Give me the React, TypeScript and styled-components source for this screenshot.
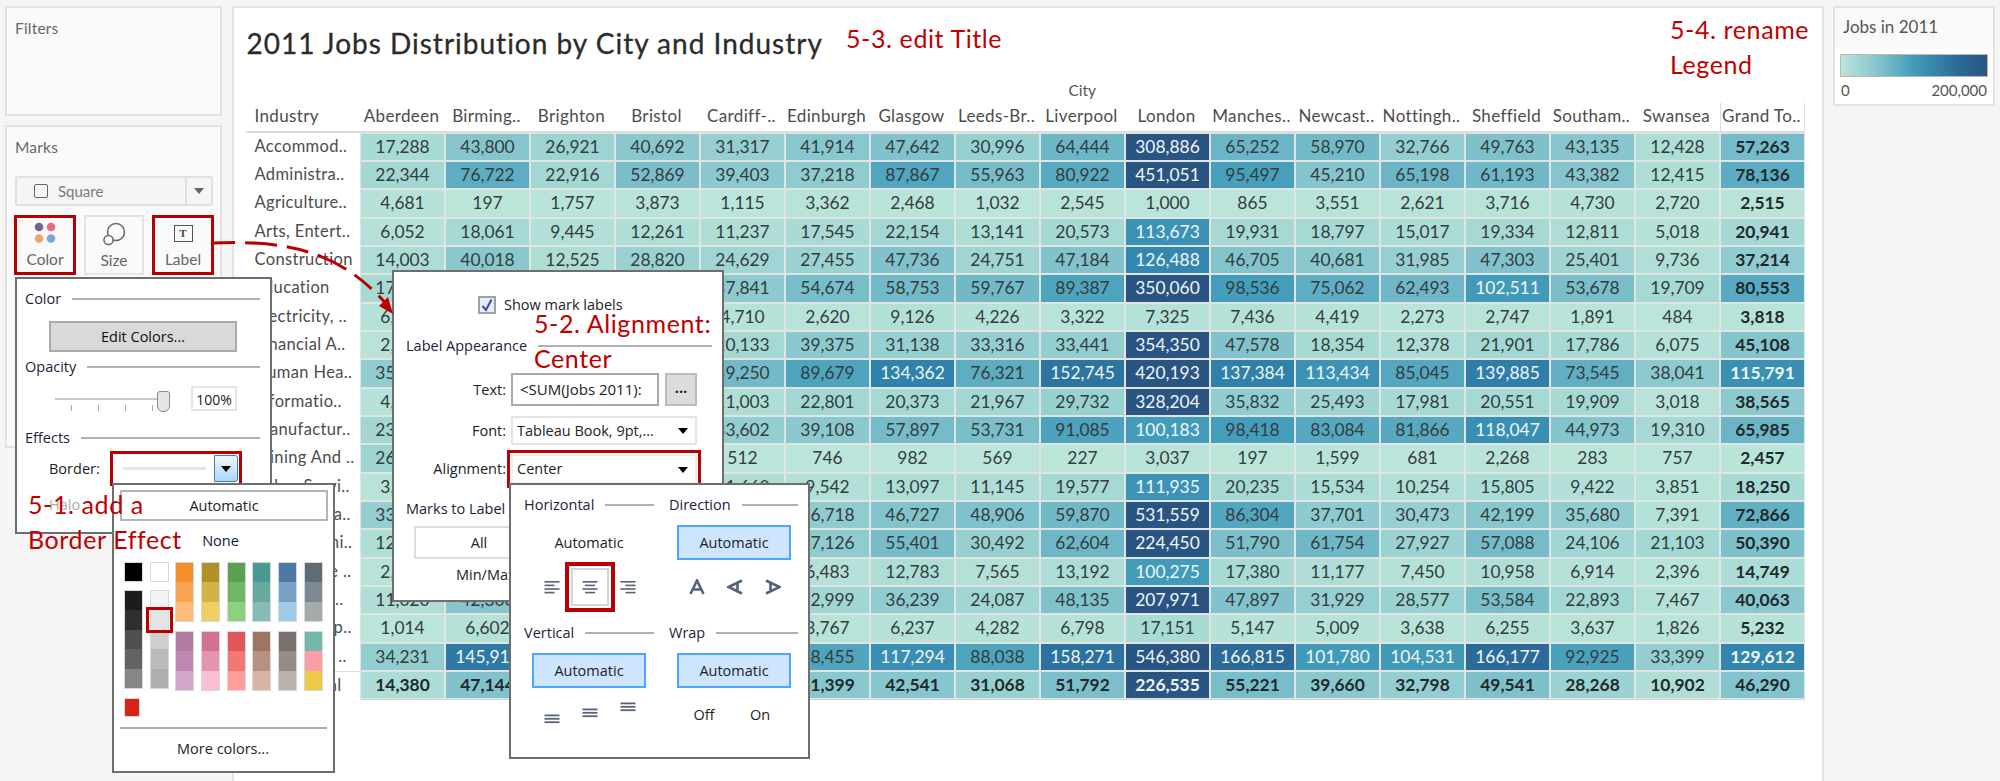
import React from "react";
import styled, { createGlobalStyle } from "styled-components";

const Global = createGlobalStyle`
  html, body { margin: 0; padding: 0; background: #f5f5f5; overflow: hidden; }
  * { box-sizing: border-box; }
`;

const cities = ["Aberdeen","Birming..","Brighton","Bristol","Cardiff-..","Edinburgh","Glasgow","Leeds-Br..","Liverpool","London","Manches..","Newcast..","Nottingh..","Sheffield","Southam..","Swansea","Grand To.."];
const rows: [string, string][] = [
["Accommod..","17,288 43,800 26,921 40,692 31,317 41,914 47,642 30,996 64,444 308,886 65,252 58,970 32,766 49,763 43,135 12,428 57,263"],
["Administra..","22,344 76,722 22,916 52,869 39,403 37,218 87,867 55,963 80,922 451,051 95,497 45,210 65,198 61,193 43,382 12,415 78,136"],
["Agriculture..","4,681 197 1,757 3,873 1,115 3,362 2,468 1,032 2,545 1,000 865 3,551 2,621 3,716 4,730 2,720 2,515"],
["Arts, Entert..","6,052 18,061 9,445 12,261 11,237 17,545 22,154 13,141 20,573 113,673 19,931 18,797 15,017 19,334 12,811 5,018 20,941"],
["Construction","14,003 40,018 12,525 28,820 24,629 27,455 47,736 24,751 47,184 126,488 46,705 40,681 31,985 47,303 25,401 9,736 37,214"],
["Education","17,950 58,300 16,200 44,100 37,841 54,674 58,753 59,767 89,387 350,060 98,536 75,062 62,493 102,511 53,678 19,709 80,553"],
["Electricity, ..","6,120 3,100 1,200 4,050 4,710 2,620 9,126 4,226 3,322 7,325 7,436 4,419 2,273 2,747 1,891 484 3,818"],
["Financial A..","2,840 40,200 9,100 38,400 20,133 39,375 31,138 33,316 33,441 354,350 47,578 18,354 12,378 21,901 17,786 6,075 45,108"],
["Human Hea..","35,120 95,400 41,300 66,800 59,250 89,679 134,362 76,321 152,745 420,193 137,384 113,434 85,045 139,885 73,545 38,041 115,791"],
["Informatio..","4,210 20,100 9,800 21,400 11,003 22,801 20,373 21,967 29,732 328,204 35,832 25,493 17,981 20,551 19,909 3,018 38,565"],
["Manufactur..","23,400 74,200 9,300 30,100 33,602 39,108 57,897 53,731 91,085 100,183 98,418 83,084 81,866 118,047 44,973 19,310 65,985"],
["Mining And ..","26,300 600 120 300 512 746 982 569 227 3,037 197 1,599 681 2,268 283 757 2,457"],
["Other Servi..","3,240 18,300 6,800 11,500 11,660 9,542 13,097 11,145 19,577 111,935 20,235 15,534 10,254 15,805 9,422 3,851 18,250"],
["Professiona..","33,410 86,200 21,300 46,700 29,100 36,718 46,727 48,906 59,870 531,559 86,304 37,701 30,473 42,199 35,680 7,391 72,866"],
["Public Admi..","12,230 54,300 11,200 31,400 28,600 37,126 55,401 30,492 62,604 224,450 51,790 61,754 27,927 57,088 24,106 21,103 50,390"],
["Real Estate ..","2,840 14,100 5,300 9,100 6,100 6,483 12,783 7,565 13,192 100,275 17,380 11,177 7,450 10,958 6,914 2,396 14,749"],
["Transporta..","11,020 42,300 12,100 31,200 18,500 22,999 36,239 24,087 48,135 207,971 47,897 31,929 28,577 53,584 22,893 7,467 40,063"],
["Water Supp..","1,014 6,602 2,100 3,400 3,100 3,767 6,237 4,282 6,798 17,151 5,147 5,009 3,638 6,255 3,637 1,826 5,232"],
["Wholesale ..","34,231 145,917 45,200 79,300 67,400 88,455 117,294 88,038 158,271 546,380 166,815 101,780 104,531 166,177 92,925 33,399 129,612"],
["Grand Total","14,380 47,144 15,100 29,700 24,200 41,399 42,541 31,068 51,792 226,535 55,221 39,660 32,798 49,541 28,268 10,902 46,290"],
];

const stops: [number, number[]][] = [
  [0,[188,229,218]],[20000,[166,217,212]],[45000,[132,196,205]],[75000,[96,174,195]],
  [100000,[66,156,185]],[135000,[47,130,172]],[166000,[44,107,153]],[200000,[42,84,130]],
];
const shade = (v: number) => {
  if (v >= 200000) return "rgb(42,84,130)";
  for (let i = 0; i < stops.length - 1; i++) {
    const [a, ca] = stops[i], [b, cb] = stops[i + 1];
    if (v <= b) {
      const t = (v - a) / (b - a);
      return `rgb(${ca.map((c, k) => Math.round(c + (cb[k] - c) * t)).join(",")})`;
    }
  }
  return "rgb(42,84,130)";
};

const ui = `"Open Sans", "Noto Sans", sans-serif`;
const tab = `Lato, "Open Sans", sans-serif`;
const RED = "#b90000";

const Page = styled.div`
  position: relative; width: 2000px; height: 781px; overflow: hidden; background: #f5f5f5;
  display: grid; grid-template-columns: 217px 1592px 162px; column-gap: 9.5px; padding: 6px 0 0 5px; align-items: start;
`;
const LeftCol = styled.div`display: flex; flex-direction: column; gap: 9px;`;
const Panel = styled.section<{ $h: number }>`
  height: ${p => p.$h}px; background: #fafafa; border: 2px solid #e2e2e2; padding: 10px 8px 0;
`;
const PanelTitle = styled.div`font: 15.5px/20px ${tab}; color: #666; letter-spacing: .2px;`;
const ShapeSelect = styled.div`
  margin-top: 19px; height: 30px; border: 2px solid #e0e0e0; border-radius: 3px; background: #f5f5f5;
  display: flex; align-items: center; width: 198px;
`;
const ShapeBox = styled.span`width: 14px; height: 14px; border: 1.5px solid #666; border-radius: 2px; margin-left: 17px;`;
const ShapeText = styled.span`font: 15px ${tab}; color: #7a7a7a; margin-left: 10px; flex: 1;`;
const ShapeArrow = styled.span`
  width: 26px; height: 100%; border-left: 2px solid #e0e0e0; display: flex; align-items: center; justify-content: center;
  &::after { content: ""; border: 5px solid transparent; border-top: 6px solid #666; margin-top: 5px; }
`;
const MarkBtns = styled.div`display: grid; grid-template-columns: 62px 60px 62px; column-gap: 8px; margin-top: 9px; margin-left: -1px;`;
const MarkBtn = styled.div<{ $marked?: boolean }>`
  height: 60px; border: ${p => (p.$marked ? `3px solid ${RED}` : "2px solid #e4e4e4")};
  display: flex; flex-direction: column; align-items: center; justify-content: flex-end; padding-bottom: 2px;
  font: 15.5px/22px ${tab}; color: #666; background: #fafafa;
`;
const MarkIcon = styled.div`height: 30px; margin-bottom: 0; display: flex; align-items: center;`;
const TBox = styled.span`
  width: 19px; height: 17px; border: 1.5px solid #555; display: flex; align-items: center; justify-content: center;
  font: bold 11px "Liberation Serif", serif; color: #444;
`;

const Sheet = styled.main`
  position: relative; height: 790px; background: #fff; border: 2px solid #e2e2e2; padding-left: 12px;
`;
const Title = styled.h1`
  margin: 0; height: 68px; padding: 20px 0 0 1px; font: 400 28px/30px ${tab}; color: #2b2b2b; letter-spacing: 1px; white-space: nowrap;
  -webkit-text-stroke: .3px #2b2b2b;
`;
const Table = styled.div`
  display: grid; grid-template-columns: 114.5px repeat(17, 85px); grid-auto-rows: 28.33px; width: 1559.5px;
`;
const TopHead = styled.div`
  grid-column: 1 / -1; height: 26px; text-align: center; padding-left: 114px; font: 15.5px/28px ${tab}; color: #555;
`;
const HeadLabel = styled.div`
  font: 17px/26px ${tab}; color: #4c4c4c; padding-left: 9px; border-bottom: 2px solid #dcdcdc; height: 29.7px; margin-top: -1.4px; letter-spacing: .35px;
`;
const Head = styled.div<{ $grand?: boolean }>`
  font: 17px/26px ${tab}; color: #4c4c4c; text-align: center; white-space: nowrap; overflow: hidden; letter-spacing: .35px;
  height: 29.7px; margin-top: -1.4px; border-bottom: 2px solid #dcdcdc; padding-right: 2px;
  ${p => p.$grand && "border-left: 1px solid #dcdcdc; border-right: 1px solid #dcdcdc;"}
`;
const RowLabel = styled.div<{ $total?: boolean }>`
  font: 16.5px/27px ${tab}; color: #4c4c4c; padding-left: 9px; white-space: nowrap; letter-spacing: .35px;
  ${p => p.$total && "border-top: 1px solid #dcdcdc;"}
`;
const Cell = styled.div<{ $bold: boolean; $light: boolean }>`
  font: ${p => (p.$bold ? 700 : 400)} 17.4px/25px ${tab};
  color: ${p => (p.$light ? "#eef6f8" : p.$bold ? "#1f2a2c" : "#333d3e")};
  text-align: center; border: 1px solid #dfe5e3;
`;
const TableEnd = styled.div`grid-column: 2 / -1; border-top: 1px solid #d4d4d4; height: 1px;`;

const Legend = styled.aside`height: 100px; background: #fff; border: 2px solid #e2e2e2;`;
const LegendHead = styled.div`height: 41px; background: #f9f9f9; padding: 8px 8px 0; font: 17px/22px ${tab}; color: #555;`;
const Ramp = styled.div`
  margin: 5px 5px 0; height: 23px; border: 1.5px solid #bdb9b0;
  background: linear-gradient(90deg, #bce5da 0%, #85c4cd 25%, #429cb9 50%, #2c6b99 80%, #2a5482 100%);
`;
const RampLabels = styled.div`display: flex; justify-content: space-between; padding: 3px 6px 0; font: 15px/20px ${tab}; color: #555;`;

const Popup = styled.div<{ $x: number; $y: number; $w: number; $h: number; $z: number }>`
  position: absolute; left: ${p => p.$x}px; top: ${p => p.$y}px; width: ${p => p.$w}px; height: ${p => p.$h}px; z-index: ${p => p.$z};
  background: #fff; border: 2px solid #6e6e6e; font: 14.5px/20px ${ui}; color: #222; 
`;
const Section = styled.div<{ $top?: number }>`
  display: flex; align-items: center; gap: 11px; height: 20px; margin-top: ${p => p.$top ?? 0}px; color: #1d1d3a;
  &::after { content: ""; flex: 1; height: 2px; background: #b0b0b0; }
`;
const EditBtn = styled.div`
  margin: 12px 0 0 24px; width: 188px; height: 31px; background: #d9d9d9; border: 2px solid #aaa;
  text-align: center; line-height: 27px; color: #111;
`;
const SliderRow = styled.div`display: flex; align-items: center; margin: 9px 0 0 30px; height: 25px;`;
const Track = styled.div`
  position: relative; width: 115px; height: 2px; background: #c9c9c9;
  &::after { content: ""; position: absolute; right: 0; top: -7px; width: 11px; height: 19px; background: #e6e6e6; border: 1.5px solid #8a8a8a; border-radius: 3px 3px 6px 6px; }
`;
const PctBox = styled.div`margin-left: 21px; width: 46px; height: 25px; border: 2px solid #e4e4e4; text-align: center; line-height: 23px; font-size: 14px;`;
const Ticks = styled.div`
  display: flex; justify-content: space-between; width: 82px; margin: -6px 0 0 46px; height: 6px;
  i { width: 1px; background: #aaa; }
`;
const FieldRow = styled.div<{ $top?: number; $left?: number }>`
  display: flex; align-items: center; margin-top: ${p => p.$top ?? 0}px; margin-left: ${p => p.$left ?? 0}px;
`;
const FieldLabel = styled.div<{ $w: number }>`width: ${p => p.$w}px; text-align: right; padding-right: 5px; flex: none;`;
const BorderSelect = styled.div`
  width: 124px; height: 27px; outline: 3.5px solid ${RED}; outline-offset: 1px; background: #fff;
  display: flex; align-items: center; margin-left: 14px;
`;
const BorderLine = styled.span`width: 83px; height: 3px; background: #e6e6e6; margin: 0 8px 0 9px;`;
const BlueArrow = styled.span`
  width: 24px; height: 27px; background: linear-gradient(#f1f8fe, #a9d7f7); border: 1.5px solid #4d7ea8; border-radius: 0 3px 3px 0;
  display: flex; align-items: center; justify-content: center;
  &::after { content: ""; border: 5px solid transparent; border-top: 6px solid #000; margin-top: 6px; }
`;
const Halo = styled.div`color: #aaa; margin: 13px 0 0 24px;`;

const AutoBtn = styled.div`
  margin: 5px 5px 0 6px; height: 31px; border: 2px solid #b5b5b5; text-align: center; line-height: 27px;
`;
const NoneLabel = styled.div`text-align: center; margin-top: 10px; height: 20px; color: #0f1646; padding-right: 6px;`;
const Swatches = styled.div`
  display: grid; grid-template-columns: repeat(8, 19px); column-gap: 6.7px; margin: 11px 0 0 10px; align-items: start;
`;
const Swatch = styled.div<{ $tall?: number; $fill?: string }>`
  border: 1.5px solid #d8d8d8; display: flex; flex-direction: column; height: ${p => p.$tall ?? 20}px;
  background: ${p => p.$fill ?? "transparent"};
  i { flex: 1; display: block; }
`;
const GrayCol = styled.div`display: flex; flex-direction: column; gap: 8px;`;
const GrayMark = styled.i`
  position: relative;
  &::after { content: ""; position: absolute; inset: -3px -5px; border: 3.5px solid ${RED}; }
`;
const ColorCol = styled.div`display: flex; flex-direction: column; gap: 9px;`;
const RedChip = styled.div`width: 16px; height: 19px; margin: 7px 0 0 10px; background: #d9231a; border: 1.5px solid #ddd;`;
const MoreRule = styled.div`height: 2px; background: #aaa; margin: 10px 6px 0 6px;`;
const MoreLabel = styled.div`text-align: center; margin-top: 10px; padding-right: 1px;`;

const CheckRow = styled.div`display: flex; align-items: center; gap: 8px; margin: 23px 0 0 72px;`;
const Check = styled.span`
  width: 18px; height: 18px; border: 2px solid #a0a0a0; background: #e9edf7; display: flex; align-items: center; justify-content: center;
`;
const InputBox = styled.div<{ $w: number }>`
  width: ${p => p.$w}px; height: 33px; border: 2px solid #aaa; padding-left: 7px; line-height: 28px; font-size: 15px; overflow: hidden; white-space: nowrap;
`;
const DotsBtn = styled.div`
  width: 32px; height: 33px; margin-left: 6px; background: #dcdcdc; border: 2px solid #bbb; text-align: center; line-height: 26px; font-weight: 700;
`;
const Select = styled.div<{ $marked?: boolean }>`
  width: 186px; height: ${p => (p.$marked ? 30 : 29)}px; border: 2px solid #e4e4e4; display: flex; align-items: center; justify-content: space-between;
  padding: 0 7px 0 4px; background: #fff; font-size: 14.5px; white-space: nowrap;
  ${p => p.$marked && `outline: 3px solid ${RED}; outline-offset: 1px; border-color: #eee;`}
  &::after { content: ""; border: 5.5px solid transparent; border-top: 6px solid #000; margin-top: 6px; }
`;
const AllBtn = styled.div`
  margin: 7px 0 0 8px; width: 130px; height: 33px; border: 2px solid #ddd; text-align: center; line-height: 29px;
`;
const MinMax = styled.div`margin: 6px 0 0 50px;`;

const AlignGrid = styled.div`display: grid; grid-template-columns: 130px 129px; column-gap: 15px; padding: 10px 0 0 13px;`;
const AlignCol = styled.div``;
const Choice = styled.div<{ $on?: boolean }>`
  width: 114px; height: 35px; margin: 10px 0 0 8px; text-align: center; line-height: 31px;
  border: 2px solid ${p => (p.$on ? "#4ea6ff" : "transparent")}; background: ${p => (p.$on ? "#cde5ff" : "transparent")};
`;
const IconRow = styled.div<{ $top: number; $h: number }>`
  display: grid; grid-template-columns: repeat(3, 38px); justify-items: center; align-items: center; margin: ${p => p.$top}px 0 0 9px; height: ${p => p.$h}px;
`;
const IconCell = styled.div<{ $marked?: boolean }>`
  position: relative; width: 38px; height: 38px; display: flex; align-items: center; justify-content: center;
  ${p => p.$marked && `border: 2px solid #d5d5d5; outline: 4px solid ${RED}; outline-offset: 2px;`}
`;
const VAlign = styled.div<{ $off: number }>`transform: translateY(${p => p.$off}px); display: flex;`;
const WrapRow = styled.div`display: grid; grid-template-columns: 56px 56px; justify-items: center; margin: 17px 0 0 7px; color: #222;`;

const Note = styled.div<{ $x: number; $y: number; $lh?: number; $w?: number }>`
  position: absolute; left: ${p => p.$x}px; top: ${p => p.$y}px; z-index: 20; width: ${p => (p.$w ? p.$w + "px" : "auto")};
  font: 400 25px/${p => p.$lh ?? 35}px Lato, sans-serif; color: #c00000; letter-spacing: .6px; 
`;
const ArrowOverlay = styled.svg`position: absolute; left: 0; top: 0; width: 2000px; height: 781px; z-index: 15; pointer-events: none;`;

const Lines = ({ kind }: { kind: "l" | "c" | "r" }) => {
  const spec = [15, 10, 15, 10];
  return (
    <svg width="16" height="15" viewBox="0 0 16 15">
      {spec.map((w, i) => {
        const x = kind === "l" ? 0.5 : kind === "c" ? (15 - w) / 2 + 0.5 : 15.5 - w;
        return <rect key={i} x={x} y={1 + i * 3.6} width={w} height="1.6" fill="#56627a" />;
      })}
    </svg>
  );
};
const Bars = () => (
  <svg width="16" height="10" viewBox="0 0 16 10">
    {[0, 1, 2].map(i => <rect key={i} x="0.5" y={0.5 + i * 3.4} width="15" height="1.8" fill="#56627a" />)}
  </svg>
);
const LetterA = ({ rot }: { rot: number }) => (
  <svg width="16" height="16" viewBox="0 0 16 16" style={{ transform: `rotate(${rot}deg)` }}>
    <path d="M1.5 15 L8 1.5 L14.5 15 M4 10.5 H12" fill="none" stroke="#56627a" strokeWidth="2.6" />
  </svg>
);

const grays1 = ["#1c1c1c", "#2f2f2f", "#4f4f4f", "#636363", "#868686"];
const grays2 = ["#f3f3f3", "#e4e4e4", "#cfcfcf", "#bbbbbb", "#b0b0b0"];
const palette = [
  [["#f28e2b","#f9a54f","#ffbc79"],["#b07aa1","#bf88b0","#d4a6c8"]],
  [["#b09028","#d3b248","#f1ce63"],["#d37295","#e494ae","#fabfd2"]],
  [["#59a14f","#6fb762","#8cd17d"],["#e15759","#f37777","#ff9d9a"]],
  [["#499894","#68a8a0","#86bcb6"],["#9d7660","#b69380","#d7b5a6"]],
  [["#4e79a7","#76a0c4","#a0cbe8"],["#79706e","#948c89","#bab0ac"]],
  [["#5f6b75","#7d8890","#a4abaa"],["#74b7ad","#ff9da7","#edc948"]],
];

export default function App() {
  return (
    <Page>
      <Global />
      <LeftCol>
        <Panel $h={110}><PanelTitle>Filters</PanelTitle></Panel>
        <Panel $h={323}>
          <PanelTitle>Marks</PanelTitle>
          <ShapeSelect><ShapeBox /><ShapeText>Square</ShapeText><ShapeArrow /></ShapeSelect>
          <MarkBtns>
            <MarkBtn $marked>
              <MarkIcon>
                <svg width="22" height="22" viewBox="0 0 22 22">
                  <circle cx="5" cy="5" r="4.3" fill="#7b6294" /><circle cx="17" cy="5" r="4.3" fill="#ef6a7a" />
                  <circle cx="5" cy="16.5" r="4.3" fill="#f0a36e" /><circle cx="17" cy="16.5" r="4.3" fill="#7ca5cf" />
                </svg>
              </MarkIcon>
              Color
            </MarkBtn>
            <MarkBtn>
              <MarkIcon>
                <svg width="24" height="24" viewBox="0 0 24 24" fill="none" stroke="#666" strokeWidth="1.5">
                  <circle cx="14" cy="10" r="8.5" /><circle cx="6.5" cy="18" r="4.6" fill="#fafafa" />
                </svg>
              </MarkIcon>
              Size
            </MarkBtn>
            <MarkBtn $marked>
              <MarkIcon><TBox>T</TBox></MarkIcon>
              Label
            </MarkBtn>
          </MarkBtns>
        </Panel>
      </LeftCol>

      <Sheet>
        <Title>2011 Jobs Distribution by City and Industry</Title>
        <Table>
          <TopHead>City</TopHead>
          <HeadLabel>Industry</HeadLabel>
          {cities.map((c, i) => <Head key={c} $grand={i === 16}>{c}</Head>)}
          {rows.map(([name, vals], r) => (
            <React.Fragment key={name}>
              <RowLabel $total={r === 19}>{name}</RowLabel>
              {vals.split(" ").map((v, c) => {
                const n = Number(v.replace(/,/g, ""));
                return (
                  <Cell key={c} $bold={r === 19 || c === 16} $light={n >= 100000} style={{ background: shade(n) }}>{v}</Cell>
                );
              })}
            </React.Fragment>
          ))}
          <div />
          <TableEnd />
        </Table>
      </Sheet>

      <Legend>
        <LegendHead>Jobs in 2011</LegendHead>
        <Ramp />
        <RampLabels><span>0</span><span>200,000</span></RampLabels>
      </Legend>

      <Popup $x={15} $y={277} $w={257} $h={257} $z={5} style={{ padding: "10px 10px 0 8px" }}>
        <Section>Color</Section>
        <EditBtn>Edit Colors...</EditBtn>
        <Section $top={5}>Opacity</Section>
        <SliderRow><Track /><PctBox>100%</PctBox></SliderRow>
        <Ticks><i /><i /><i /><i /></Ticks>
        <Section $top={17}>Effects</Section>
        <FieldRow $top={7} $left={24}>
          <span>Border:</span>
          <BorderSelect><BorderLine /><BlueArrow /></BorderSelect>
        </FieldRow>
        <Halo>Halo</Halo>
      </Popup>

      <Popup $x={112} $y={483} $w={223} $h={290} $z={7}>
        <AutoBtn>Automatic</AutoBtn>
        <NoneLabel>None</NoneLabel>
        <Swatches>
          <GrayCol>
            <Swatch $fill="#000" />
            <Swatch $tall={99}>{grays1.map(c => <i key={c} style={{ background: c }} />)}</Swatch>
          </GrayCol>
          <GrayCol>
            <Swatch $fill="#fff" />
            <Swatch $tall={99}>
              {grays2.map((c, i) => i === 1
                ? <GrayMark key={c} style={{ background: c }} />
                : <i key={c} style={{ background: c }} />)}
            </Swatch>
          </GrayCol>
          {palette.map((col, i) => (
            <ColorCol key={i}>
              {col.map((set, j) => (
                <Swatch key={j} $tall={60}>{set.map(c => <i key={c} style={{ background: c }} />)}</Swatch>
              ))}
            </ColorCol>
          ))}
        </Swatches>
        <RedChip />
        <MoreRule />
        <MoreLabel>More colors...</MoreLabel>
      </Popup>

      <Popup $x={392} $y={270} $w={332} $h={332} $z={5} style={{ padding: "0 10px 0 12px" }}>
        <CheckRow>
          <Check>
            <svg width="12" height="14" viewBox="0 0 12 14"><path d="M1.5 8 L5 12 L10.5 1.5" fill="none" stroke="#3a4cab" strokeWidth="2" /></svg>
          </Check>
          Show mark labels
        </CheckRow>
        <Section $top={21}>Label Appearance</Section>
        <FieldRow $top={17}>
          <FieldLabel $w={105}>Text:</FieldLabel>
          <InputBox $w={148}>&lt;SUM(Jobs 2011):</InputBox>
          <DotsBtn>...</DotsBtn>
        </FieldRow>
        <FieldRow $top={10}>
          <FieldLabel $w={105}>Font:</FieldLabel>
          <Select>Tableau Book, 9pt,...</Select>
        </FieldRow>
        <FieldRow $top={9}>
          <FieldLabel $w={105}>Alignment:</FieldLabel>
          <Select $marked>Center</Select>
        </FieldRow>
        <Section $top={15}>Marks to Label</Section>
        <AllBtn>All</AllBtn>
        <MinMax>Min/Max</MinMax>
      </Popup>

      <Popup $x={509} $y={483} $w={301} $h={276} $z={6}>
        <AlignGrid>
          <AlignCol>
            <Section>Horizontal</Section>
            <Choice>Automatic</Choice>
            <IconRow $top={8} $h={38}>
              <IconCell><Lines kind="l" /></IconCell>
              <IconCell $marked><Lines kind="c" /></IconCell>
              <IconCell><Lines kind="r" /></IconCell>
            </IconRow>
            <Section $top={17}>Vertical</Section>
            <Choice $on>Automatic</Choice>
            <IconRow $top={13} $h={24}>
              <VAlign $off={6}><Bars /></VAlign>
              <VAlign $off={0}><Bars /></VAlign>
              <VAlign $off={-6}><Bars /></VAlign>
            </IconRow>
          </AlignCol>
          <AlignCol>
            <Section>Direction</Section>
            <Choice $on>Automatic</Choice>
            <IconRow $top={8} $h={38}>
              <IconCell><LetterA rot={0} /></IconCell>
              <IconCell><LetterA rot={-90} /></IconCell>
              <IconCell><LetterA rot={90} /></IconCell>
            </IconRow>
            <Section $top={17}>Wrap</Section>
            <Choice $on>Automatic</Choice>
            <WrapRow><span>Off</span><span>On</span></WrapRow>
          </AlignCol>
        </AlignGrid>
      </Popup>

      <ArrowOverlay viewBox="0 0 2000 781">
        <path d="M213 243 C 285 240 340 250 388 306" fill="none" stroke={RED} strokeWidth="3" strokeDasharray="22 10 32 10" />
        <path d="M393 314 L379 306 L388 297 Z" fill={RED} />
      </ArrowOverlay>

      <Note $x={28} $y={487} $w={170}>5-1. add a<br />Border Effect</Note>
      <Note $x={534} $y={306} $w={190}>5-2. Alignment:<br />Center</Note>
      <Note $x={846} $y={21}>5-3. edit Title</Note>
      <Note $x={1670} $y={12}>5-4. rename<br />Legend</Note>
    </Page>
  );
}
